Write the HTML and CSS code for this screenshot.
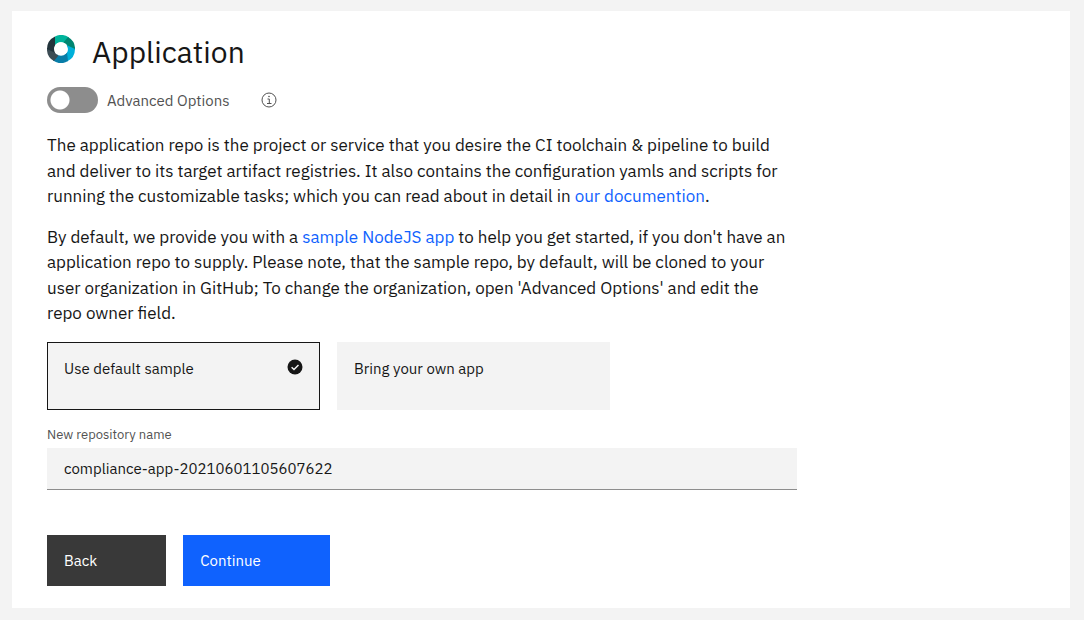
FILE: index.html
```html
<!DOCTYPE html>
<html lang="en">
<head>
<meta charset="utf-8">
<meta name="viewport" content="width=device-width, initial-scale=1">
<title>Application</title>
<link rel="stylesheet" href="styles.css">
</head>
<body>
<main class="card">
  <header class="heading">
    <svg class="logo" viewBox="0 0 28 28" aria-hidden="true">
      <path fill="#00b39b" d="M8 1.4A14 14 0 0 1 22 2.5L18 8.5A7 7 0 0 0 8 10.5Z"/>
      <path fill="#008571" d="M21 1.9A14 14 0 0 1 28 15L20.8 14A7 7 0 0 0 16.5 7.5Z"/>
      <path fill="#00b0da" d="M28 14A14 14 0 0 1 20 26.6L16 20.7A7 7 0 0 0 19.5 10Z"/>
      <path fill="#087da8" d="M21 26.1A14 14 0 0 1 6 25.5L10.5 18A7 7 0 0 0 20 17.6Z"/>
      <path fill="#3c4c54" d="M7 26.1A14 14 0 0 1 0 13L7.2 14A7 7 0 0 0 11.5 20.5Z"/>
      <path fill="#23343c" d="M0 14A14 14 0 0 1 8 1.4V10.5A7 7 0 0 0 8.4 18Z"/>
      <circle cx="14" cy="14" r="6.8" fill="#fff"/>
    </svg>
    <h1 class="title">Application</h1>
  </header>

  <div class="options">
    <label class="switch-label">
      <input class="switch" type="checkbox" role="switch">
      Advanced Options
    </label>
    <button class="info" type="button" aria-label="About advanced options">
      <svg viewBox="0 0 16 16" fill="none" stroke="#525252" aria-hidden="true">
        <circle cx="8" cy="8" r="7"/>
        <path d="M6.5 7H8.3V11.5M6 11.5H10.5"/>
        <circle cx="8" cy="4.5" r=".8" fill="#525252" stroke="none"/>
      </svg>
    </button>
  </div>

  <div class="content">
    <p class="copy">The application repo is the project or service that you desire the CI toolchain &amp; pipeline to build and deliver to its target artifact registries. It also contains the configuration yamls and scripts for running the customizable tasks; which you can read about in detail in <a class="link" href="#docs">our documention</a>.</p>
    <p class="copy">By default, we provide you with a <a class="link" href="#sample">sample NodeJS app</a> to help you get started, if you don't have an application repo to supply. Please note, that the sample repo, by default, will be cloned to your user organization in GitHub; To change the organization, open 'Advanced Options' and edit the repo owner field.</p>

    <div class="tiles">
      <button class="tile tile-selected" type="button" aria-pressed="true">
        Use default sample
        <svg class="check" viewBox="0 0 16 16" aria-hidden="true">
          <circle cx="8" cy="8" r="7.5" fill="#161616"/>
          <path d="M4.6 8.2L7 10.6L11.5 6" fill="none" stroke="#f4f4f4" stroke-width="1.4"/>
        </svg>
      </button>
      <button class="tile" type="button" aria-pressed="false">Bring your own app</button>
    </div>

    <label class="field-label" for="repo">New repository name</label>
    <input class="field" id="repo" type="text" value="compliance-app-20210601105607622">

    <div class="actions">
      <button class="button button-back" type="button">Back</button>
      <button class="button button-continue" type="button">Continue</button>
    </div>
  </div>
</main>
</body>
</html>
```
FILE: styles.css
```css
* { box-sizing: border-box; }

body {
  margin: 0;
  padding: 11px 14px 12px 12px;
  background: #f3f3f3;
  color: #161616;
  font-family: "IBM Plex Sans", "Noto Sans", sans-serif;
  font-size: 17px;
}

button, input { font: inherit; color: inherit; }

.card {
  padding: 21px 34px 22px 35px;
  background: #fff;
}

.heading {
  display: flex;
  align-items: center;
  gap: 17px;
}

.logo {
  width: 28px;
  height: 28px;
  margin-bottom: 6px;
}

.title {
  margin: 0;
  font-size: 30px;
  font-weight: 400;
  line-height: 40px;
}

.options {
  display: flex;
  align-items: center;
  gap: 31px;
  margin-top: 15px;
}

.switch-label {
  display: flex;
  align-items: center;
  gap: 9px;
  color: #525252;
  font-size: 15px;
}

.switch {
  appearance: none;
  width: 51px;
  height: 26px;
  margin: 0;
  border-radius: 13px;
  background: radial-gradient(circle at 13px 13px, #fff 9px, #8d8d8d 10px);
}

.info {
  display: flex;
  padding: 0;
  border: 0;
  background: none;
}

.info svg { width: 16px; height: 16px; }

.content {
  max-width: 750px;
  margin-top: 20px;
}

.copy {
  margin: 0 0 15px;
  line-height: 1.5;
}

.link {
  color: #0f62fe;
  text-decoration: none;
}

.tiles {
  display: flex;
  gap: 17px;
}

.tile {
  display: flex;
  flex: 0 1 273px;
  align-items: flex-start;
  justify-content: space-between;
  min-height: 68px;
  padding: 16px;
  border: 1px solid #f3f3f3;
  background: #f3f3f3;
  font-size: 15px;
  line-height: 20px;
  text-align: left;
}

.tile-selected { border-color: #161616; }

.check { width: 16px; height: 16px; }

.field-label {
  display: block;
  margin-top: 16px;
  color: #525252;
  font-size: 13px;
  line-height: 18px;
}

.field {
  display: block;
  width: 100%;
  height: 42px;
  margin-top: 4px;
  padding: 0 17px;
  border: 0;
  border-bottom: 1px solid #8d8d8d;
  border-radius: 0;
  background: #f3f3f3;
  font-size: 15px;
}

.actions {
  display: flex;
  gap: 17px;
  margin-top: 45px;
}

.button {
  min-height: 51px;
  padding: 0 69px 0 17px;
  border: 0;
  color: #fff;
  font-size: 15px;
  text-align: left;
}

.button-back { background: #393939; }
.button-continue { background: #0f62fe; }
```
